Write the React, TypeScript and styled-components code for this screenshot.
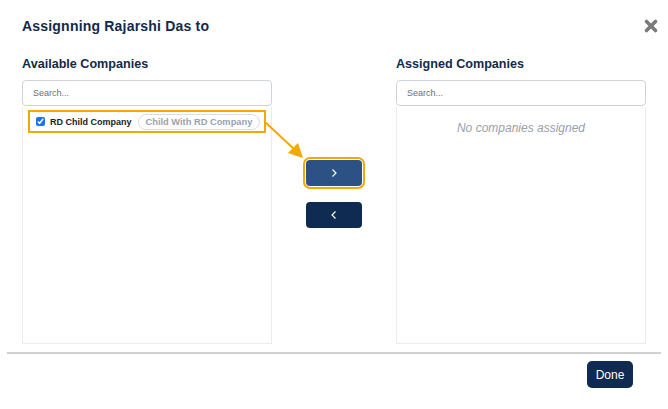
import React from "react";
import styled, { createGlobalStyle } from "styled-components";

const Global = createGlobalStyle`
  html, body { margin: 0; padding: 0; background: #fff; }
  body { font-family: "Liberation Sans", Arial, "Noto Sans", sans-serif; }
  * { box-sizing: border-box; }
`;

const Modal = styled.div`
  position: relative;
  width: 668px;
  height: 409px;
  background: #fff;
  display: flex;
  flex-direction: column;
`;

const Header = styled.div`
  display: flex;
  align-items: center;
  justify-content: space-between;
  padding: 13px 9px 0 22px;
  height: 38px;
`;

const Title = styled.h2`
  margin: 0;
  font-size: 14px;
  font-weight: 700;
  color: #13294b;
  letter-spacing: 0.2px;
`;

const Close = styled.button`
  border: 0;
  background: none;
  padding: 0;
  width: 16px;
  height: 16px;
  display: flex;
  cursor: pointer;
`;

const Body = styled.div`
  display: grid;
  grid-template-columns: 250px 1fr 250px;
  padding: 19px 22px 0 22px;
`;

const Column = styled.div`
  display: flex;
  flex-direction: column;
`;

const ColTitle = styled.h3`
  margin: 0 0 8px;
  font-size: 12.6px;
  font-weight: 700;
  color: #13294b;
  line-height: 15px;
`;

const Search = styled.input`
  height: 26px;
  border: 1px solid #cfd3da;
  border-radius: 4px;
  padding: 0 10px;
  font-family: inherit;
  font-size: 9px;
  color: #333;
  outline: none;
  &::placeholder { color: #6b6f76; }
`;

const ListBox = styled.div`
  height: 237px;
  border: 1px solid #ececec;
  border-top: none;
  margin-top: 1px;
  padding: 3px 5px;
  display: flex;
  flex-direction: column;
`;

const Row = styled.label<{ $highlight?: boolean }>`
  display: flex;
  align-items: center;
  gap: 5px;
  height: 23px;
  padding: 0 5px 0 6px;
  border: 2px solid ${(p) => (p.$highlight ? "#f5a800" : "transparent")};
`;

const Check = styled.input`
  margin: 0;
  width: 9px;
  height: 9px;
  accent-color: #1a73e8;
`;

const RowName = styled.span`
  font-size: 9px;
  font-weight: 700;
  color: #222;
  white-space: nowrap;
`;

const Pill = styled.span`
  margin-left: 1px;
  padding: 0 7px;
  height: 16px;
  line-height: 14px;
  border: 1px solid #d9dde4;
  border-radius: 9px;
  font-size: 9.3px;
  font-weight: 700;
  color: #9aa1b1;
  white-space: nowrap;
`;

const Empty = styled.div`
  text-align: center;
  font-size: 12px;
  font-style: italic;
  color: #9aa0ab;
  padding-top: 11px;
`;

const Middle = styled.div`
  display: flex;
  flex-direction: column;
  align-items: center;
  gap: 16px;
  padding-top: 103px;
`;

const MoveButton = styled.button<{ $light?: boolean; $focus?: boolean }>`
  width: 56px;
  height: 26px;
  border: 0;
  border-radius: 4px;
  background: ${(p) => (p.$light ? "#2b5185" : "#0f2b52")};
  display: flex;
  align-items: center;
  justify-content: center;
  outline: ${(p) => (p.$focus ? "2px solid #f5a800" : "none")};
  outline-offset: 1px;
  cursor: pointer;
`;

const Divider = styled.hr`
  margin: 8px 7px 0 7px;
  border: 0;
  border-top: 2px solid #d0d0d0;
`;

const Footer = styled.div`
  display: flex;
  justify-content: flex-end;
  padding: 7px 35px 0 0;
`;

const DoneButton = styled.button`
  width: 46px;
  height: 27px;
  border: 0;
  border-radius: 5px;
  background: #0f2b52;
  color: #fff;
  font-family: inherit;
  font-size: 12px;
  font-weight: 400;
  cursor: pointer;
`;

const Annotation = styled.svg`
  position: absolute;
  left: 0;
  top: 0;
  pointer-events: none;
`;

const Chevron = ({ dir }: { dir: "left" | "right" }) => (
  <svg width="8" height="10" viewBox="0 0 8 10">
    <path
      d={dir === "right" ? "M2.5 1.5 L6 5 L2.5 8.5" : "M5.5 1.5 L2 5 L5.5 8.5"}
      fill="none"
      stroke="#fff"
      strokeWidth="1.2"
    />
  </svg>
);

export default function App() {
  return (
    <>
      <Global />
      <Modal>
        <Header>
          <Title>Assignning Rajarshi Das to</Title>
          <Close aria-label="close">
            <svg width="16" height="16" viewBox="0 0 16 16">
              <path d="M3.5 3.5 L12.5 12.5 M12.5 3.5 L3.5 12.5" stroke="#7a7a7a" strokeWidth="3.6" strokeLinecap="round" />
            </svg>
          </Close>
        </Header>
        <Body>
          <Column>
            <ColTitle>Available Companies</ColTitle>
            <Search placeholder="Search..." />
            <ListBox>
              <Row $highlight>
                <Check type="checkbox" defaultChecked />
                <RowName>RD Child Company</RowName>
                <Pill>Child With RD Company</Pill>
              </Row>
            </ListBox>
          </Column>
          <Middle>
            <MoveButton $light $focus aria-label="assign">
              <Chevron dir="right" />
            </MoveButton>
            <MoveButton aria-label="unassign">
              <Chevron dir="left" />
            </MoveButton>
          </Middle>
          <Column>
            <ColTitle>Assigned Companies</ColTitle>
            <Search placeholder="Search..." />
            <ListBox>
              <Empty>No companies assigned</Empty>
            </ListBox>
          </Column>
        </Body>
        <Divider />
        <Footer>
          <DoneButton>Done</DoneButton>
        </Footer>
        <Annotation width="668" height="409" viewBox="0 0 668 409">
          <line x1="265" y1="122" x2="294" y2="149" stroke="#f5a800" strokeWidth="2" />
          <polygon points="303,158 288,153 298,143" fill="#f5a800" />
        </Annotation>
      </Modal>
    </>
  );
}
